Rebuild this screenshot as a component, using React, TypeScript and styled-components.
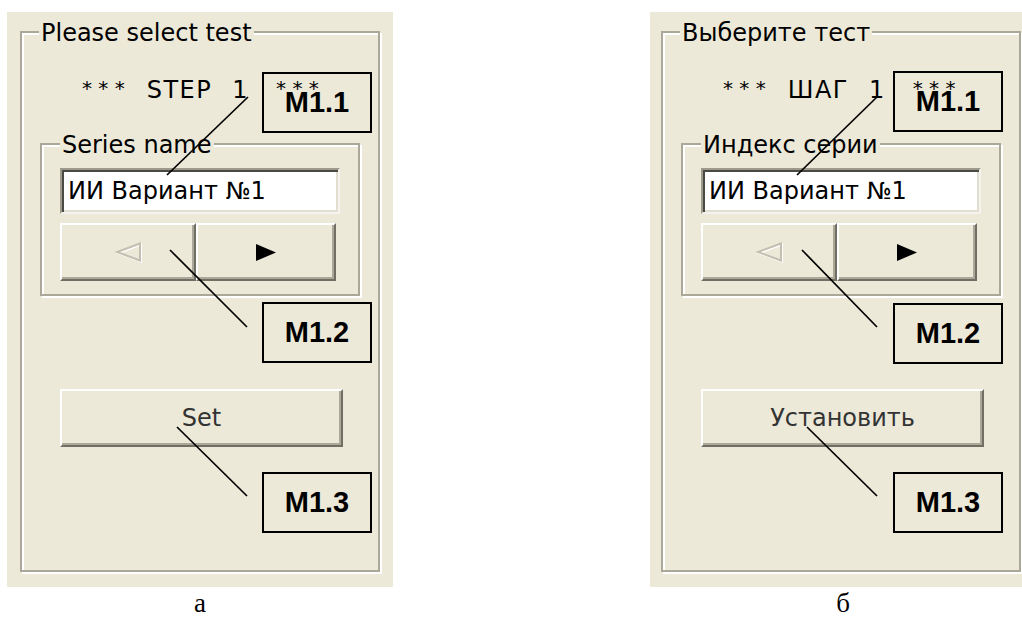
import React from "react";
import styled, { createGlobalStyle } from "styled-components";

const c = {
  face: "#ece9d8",
  etch: "#aca899",
  dark: "#716f64",
  light: "#ffffff",
};

const ui = `"DejaVu Sans", "Liberation Sans", sans-serif`;

const Global = createGlobalStyle`
  html, body { margin: 0; padding: 0; background: #fff; overflow: hidden; }
`;

const Page = styled.div`
  display: flex;
  gap: 257px;
  padding: 12px 0 0 7px;
  width: 1022px;
  height: 623px;
  box-sizing: border-box;
  overflow: hidden;
`;

const Figure = styled.figure`
  margin: 0;
  flex: 0 0 386px;
  display: flex;
  flex-direction: column;
  align-items: center;
`;

const Window = styled.div<{ $padLeft: number }>`
  position: relative;
  align-self: stretch;
  height: 575px;
  box-sizing: border-box;
  padding: 19px 0 15px ${(p) => p.$padLeft}px;
  background: ${c.face};
  display: flex;
  font-family: ${ui};
  font-size: 24px;
  color: #000;
`;

const GroupBox = styled.div<{ $w: number; $inner?: boolean }>`
  box-sizing: border-box;
  width: ${(p) => p.$w}px;
  border: 2px solid ${c.etch};
  box-shadow: inset 2px 2px 0 ${c.light}, 2px 2px 0 ${c.light};
  display: flex;
  flex-direction: column;
  align-items: flex-start;
  ${(p) => (p.$inner ? "margin: 38px 0 0 18px; padding: 0 0 13px 18px;" : "")}
`;

const Legend = styled.span`
  margin: -14px 0 0 17px;
  padding: 0 2px;
  background: ${c.face};
  line-height: 28px;
  white-space: nowrap;
`;

const StepRow = styled.div`
  display: flex;
  align-items: baseline;
  margin-top: 29px;
  line-height: 28px;
  white-space: nowrap;
`;

const Stars = styled.span<{ $gap: number }>`
  margin-left: ${(p) => p.$gap}px;
  font-size: 20px;
  vertical-align: 3px;
  position: relative;
  top: -3px;
`;

const StepWord = styled.span<{ $gap: number }>`
  margin-left: ${(p) => p.$gap}px;
  letter-spacing: 1.5px;
`;

const Field = styled.input`
  box-sizing: border-box;
  width: 280px;
  height: 46px;
  margin: 9px 0 0 0;
  padding: 0 6px;
  border: 2px solid;
  border-color: #9d9a8c #f4f3ee #f4f3ee #9d9a8c;
  box-shadow: inset 2px 2px 0 #4a4a44, inset -2px -2px 0 #e2dfd2;
  background: #fff;
  font-family: ${ui};
  font-size: 24px;
  color: #000;
  outline: none;
  appearance: none;
`;

const NavRow = styled.div`
  display: flex;
  margin-top: 9px;
`;

const Button = styled.button<{ $w: number }>`
  box-sizing: border-box;
  width: ${(p) => p.$w}px;
  height: 58px;
  padding: 0;
  border: 2px solid;
  border-color: ${c.light} ${c.dark} ${c.dark} ${c.light};
  box-shadow: inset -2px -2px 0 ${c.etch};
  background: ${c.face};
  display: flex;
  align-items: center;
  justify-content: center;
  font-family: ${ui};
  font-size: 24px;
  color: #333;
`;

const SetButton = styled(Button)`
  margin: 93px 0 0 38px;
`;

const Callout = styled.div<{ $x: number; $y: number }>`
  position: absolute;
  left: ${(p) => p.$x}px;
  top: ${(p) => p.$y}px;
  box-sizing: border-box;
  width: 110px;
  height: 61px;
  border: 2px solid #000;
  display: flex;
  align-items: center;
  justify-content: center;
  font-family: "Liberation Sans", Arial, sans-serif;
  font-weight: 700;
  font-size: 29px;
  color: #000;
`;

const Leaders = styled.svg`
  position: absolute;
  left: 0;
  top: 0;
  width: 100%;
  height: 100%;
  pointer-events: none;
`;

const Caption = styled.figcaption`
  margin-top: 1px;
  font-family: "Liberation Serif", "Times New Roman", serif;
  font-size: 27px;
  line-height: 30px;
  color: #000;
`;

const PrevArrow = () => (
  <svg width="27" height="22" viewBox="0 0 27 22">
    <polygon points="25,2.5 2,11 25,19.5" fill="none" stroke="#fff" strokeWidth="2" transform="translate(1 1)" />
    <polygon points="25,2.5 2,11 25,19.5" fill="none" stroke="#c2bfb0" strokeWidth="2" />
  </svg>
);

const NextArrow = () => (
  <svg width="20" height="17" viewBox="0 0 20 17">
    <polygon points="0,0 20,8.5 0,17" fill="#000" />
  </svg>
);

type Panel = {
  padLeft: number;
  title: string;
  step: string;
  series: string;
  action: string;
  caption: string;
  boxX: number;
  boxY: number[];
  lines: number[][];
};

const panels: Panel[] = [
  {
    padLeft: 13,
    title: "Please select test",
    step: "STEP",
    series: "Series name",
    action: "Set",
    caption: "а",
    boxX: 255,
    boxY: [60, 290, 460],
    lines: [
      [241, 85, 160, 163],
      [163, 238, 240, 315],
      [170, 415, 240, 484],
    ],
  },
  {
    padLeft: 11,
    title: "Выберите тест",
    step: "ШАГ",
    series: "Индекс серии",
    action: "Установить",
    caption: "б",
    boxX: 243,
    boxY: [59, 291, 460],
    lines: [
      [227, 85, 147, 163],
      [152, 238, 227, 315],
      [157, 415, 227, 484],
    ],
  },
];

function TestWindow({ p }: { p: Panel }) {
  return (
    <Figure>
      <Window $padLeft={p.padLeft}>
        <GroupBox $w={360}>
          <Legend>{p.title}</Legend>
          <StepRow>
            <Stars $gap={60}>* * *</Stars>
            <StepWord $gap={22}>{p.step}</StepWord>
            <StepWord $gap={20}>1</StepWord>
            <Stars $gap={27}>* * *</Stars>
          </StepRow>
          <GroupBox $w={320} $inner>
            <Legend style={{ marginLeft: 0 }}>{p.series}</Legend>
            <Field readOnly value="ИИ Вариант №1" />
            <NavRow>
              <Button $w={136}><PrevArrow /></Button>
              <Button $w={140}><NextArrow /></Button>
            </NavRow>
          </GroupBox>
          <SetButton $w={283}>{p.action}</SetButton>
        </GroupBox>
        <Leaders>
          {p.lines.map(([x1, y1, x2, y2], i) => (
            <line key={i} x1={x1} y1={y1} x2={x2} y2={y2} stroke="#000" strokeWidth="1.7" />
          ))}
        </Leaders>
        {p.boxY.map((y, i) => (
          <Callout key={i} $x={p.boxX} $y={y}>M1.{i + 1}</Callout>
        ))}
      </Window>
      <Caption>{p.caption}</Caption>
    </Figure>
  );
}

export default function App() {
  return (
    <>
      <Global />
      <Page>
        {panels.map((p) => (
          <TestWindow key={p.caption} p={p} />
        ))}
      </Page>
    </>
  );
}
